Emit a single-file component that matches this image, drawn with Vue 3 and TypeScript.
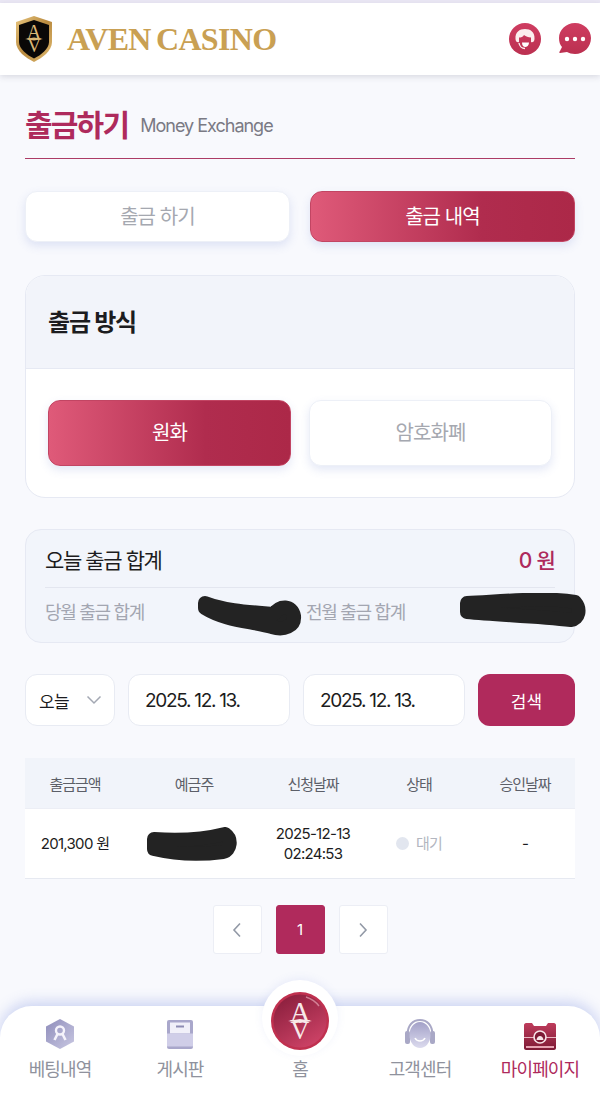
<template>
  <div class="page">
    <div class="topline"></div>
    <header class="header">
      <div class="brand">
        <svg class="shield" width="40" height="48" viewBox="0 0 40 48">
          <defs>
            <linearGradient id="goldEdge" x1="0" y1="0" x2="1" y2="1">
              <stop offset="0" stop-color="#e8c67f" />
              <stop offset="0.5" stop-color="#b98a3f" />
              <stop offset="1" stop-color="#e2bd73" />
            </linearGradient>
          </defs>
          <path d="M20 1 L38 7 V27 C38 36 28 43 20 47 C12 43 2 36 2 27 V7 Z" fill="url(#goldEdge)" />
          <path d="M20 5 L35 10 V27 C35 34 27 40 20 43.5 C13 40 5 34 5 27 V10 Z" fill="#0a0807" />
          <path d="M11 24 L20 22.5 L29 24 L20 25.5 Z" fill="#d9b675" />
          <text class="mono" fill="#d9b675">
            <tspan x="20" y="24" font-size="20">A</tspan>
            <tspan x="20" y="37" font-size="19">V</tspan>
          </text>
        </svg>
        <span class="brand-name">AVEN CASINO</span>
      </div>
      <div class="header-icons">
        <svg width="32" height="32" viewBox="0 0 32 32">
          <defs>
            <linearGradient id="redA" x1="0" y1="0" x2="0" y2="1">
              <stop offset="0" stop-color="#cf3d61" />
              <stop offset="1" stop-color="#bb3050" />
            </linearGradient>
          </defs>
          <circle cx="16" cy="16" r="16" fill="url(#redA)" />
          <path d="M6.5 16 C6 9 10.5 6 16 6 C21.5 6 26 9 25.5 16 C25.5 18.5 23.5 20 22 19 V14.5 C19 14.5 17 13.5 15 12 C14 14 12 14.5 10 14.5 V19 C8.5 20 6.5 18.5 6.5 16 Z" fill="#fbeeee" />
          <path d="M13 19.5 H20 C20 22.5 17.8 24 16.2 24 C14.5 24 13 22.5 13 19.5 Z" fill="#fff" />
          <path d="M10 20 C10.5 23 13 25.5 16 25.5" fill="none" stroke="#fbeeee" stroke-width="1.4" />
        </svg>
        <svg width="32" height="32" viewBox="0 0 32 32">
          <path d="M16 0 C25 0 32 7 32 15 C32 24 25 31 16 31 C13 31 10 30 8 29 L1 30 C0 30 0 29 1 28 L3 24 C1 22 0 19 0 15 C0 7 7 0 16 0 Z" fill="url(#redA)" />
          <circle cx="8" cy="16" r="2.2" fill="#fff" />
          <circle cx="16" cy="16" r="2.2" fill="#fff" />
          <circle cx="24" cy="16" r="2.2" fill="#fff" />
        </svg>
      </div>
    </header>

    <main class="content">
      <div class="title-row">
        <h1>출금하기</h1>
        <span>Money Exchange</span>
      </div>

      <div class="tabs">
        <button class="btn plain">출금 하기</button>
        <button class="btn active">출금 내역</button>
      </div>

      <section class="method">
        <div class="method-head">출금 방식</div>
        <div class="method-body">
          <button class="btn active tall">원화</button>
          <button class="btn plain tall">암호화폐</button>
        </div>
      </section>

      <section class="summary">
        <div class="summary-top">
          <span>오늘 출금 합계</span>
          <strong>0 원</strong>
        </div>
        <div class="summary-bottom">
          <span class="sum-left">당월 출금 합계</span>
          <span class="sum-right">전월 출금 합계</span>
        </div>
        <svg class="scribble one" width="108" height="42" viewBox="0 0 108 42">
          <path d="M9 8 C30 16 55 17 78 19 C84 10 96 10 98 21 C99 31 88 36 76 32 C55 26 30 26 9 13 Z" fill="#232323" stroke="#232323" stroke-width="14" stroke-linejoin="round" />
        </svg>
        <svg class="scribble two" width="130" height="36" viewBox="0 0 130 36">
          <path d="M10 10 C50 8 90 4 118 9 C124 16 122 26 114 27 C80 23 40 22 10 19 Z" fill="#232323" stroke="#232323" stroke-width="14" stroke-linejoin="round" />
        </svg>
      </section>

      <div class="filter">
        <div class="field select">
          <span>오늘</span>
          <svg width="16" height="10" viewBox="0 0 16 10"><path d="M1.5 1.5 L8 8 L14.5 1.5" fill="none" stroke="#a3a8b3" stroke-width="1.5" /></svg>
        </div>
        <div class="field date">2025. 12. 13.</div>
        <div class="field date">2025. 12. 13.</div>
        <button class="search">검색</button>
      </div>

      <div class="table">
        <div class="row head">
          <div v-for="col in columns" :key="col">{{ col }}</div>
        </div>
        <div class="row body">
          <div>201,300 원</div>
          <div class="holder">
            <svg width="92" height="34" viewBox="0 0 92 34">
              <path d="M9 12 C35 14 60 12 80 7 C87 12 86 23 78 25 C55 28 30 27 9 22 Z" fill="#232323" stroke="#232323" stroke-width="14" stroke-linejoin="round" />
            </svg>
          </div>
          <div>2025-12-13<br />02:24:53</div>
          <div class="status"><i></i>대기</div>
          <div>-</div>
        </div>
      </div>

      <div class="pager">
        <button>
          <svg width="10" height="16" viewBox="0 0 10 16"><path d="M8 1.5 L2 8 L8 14.5" fill="none" stroke="#9299a6" stroke-width="1.6" /></svg>
        </button>
        <button class="current">1</button>
        <button>
          <svg width="10" height="16" viewBox="0 0 10 16"><path d="M2 1.5 L8 8 L2 14.5" fill="none" stroke="#9299a6" stroke-width="1.6" /></svg>
        </button>
      </div>
    </main>

    <nav class="bottom">
      <div class="home-disc">
        <svg width="58" height="58" viewBox="0 0 58 58">
          <defs>
            <linearGradient id="homeFill" x1="0.2" y1="0" x2="0.8" y2="1">
              <stop offset="0" stop-color="#8a1f3d" />
              <stop offset="1" stop-color="#d04468" />
            </linearGradient>
          </defs>
          <circle cx="29" cy="29" r="29" fill="#c0304f" />
          <circle cx="29" cy="29" r="26.5" fill="url(#homeFill)" />
          <path d="M35 5 C41 7 45 10 48 14" fill="none" stroke="#f3b7c4" stroke-width="1.4" opacity=".6" />
          <path d="M17 29 L29 27 L41 29 L29 31 Z" fill="#f8e9e9" />
          <text class="mono" fill="#f8e9e9">
            <tspan x="29" y="29" font-size="28">A</tspan>
            <tspan x="29" y="47" font-size="26">V</tspan>
          </text>
        </svg>
      </div>
      <div class="tab">
        <svg width="30" height="32" viewBox="0 0 30 32">
          <defs>
            <linearGradient id="lilac" x1="0" y1="0" x2="1" y2="1">
              <stop offset="0" stop-color="#8f8dbb" />
              <stop offset="1" stop-color="#c9c8e2" />
            </linearGradient>
            <linearGradient id="lilacUp" x1="0" y1="0" x2="0" y2="1">
              <stop offset="0" stop-color="#a3a1c8" />
              <stop offset="1" stop-color="#dcdbee" />
            </linearGradient>
          </defs>
          <path d="M15 1 L29 8.5 V23.5 L15 31 L1 23.5 V8.5 Z" fill="url(#lilac)" />
          <circle cx="15" cy="12.5" r="4" fill="none" stroke="#f5f3fb" stroke-width="2.4" />
          <path d="M12.5 16 L9.5 22 M17.5 16 L20.5 22" stroke="#f5f3fb" stroke-width="2.6" />
        </svg>
        <span>베팅내역</span>
      </div>
      <div class="tab">
        <svg width="28" height="31" viewBox="0 0 28 31">
          <rect x="1" y="1" width="26" height="29" rx="2" fill="#a9a7cb" />
          <rect x="4" y="3.5" width="20" height="11" fill="#f1f0f9" />
          <rect x="10" y="6.5" width="8" height="2" fill="#8e8cb3" />
          <rect x="1" y="14.5" width="26" height="13" fill="#d0cee8" />
        </svg>
        <span>게시판</span>
      </div>
      <div class="tab home"><span>홈</span></div>
      <div class="tab">
        <svg width="32" height="32" viewBox="0 0 32 32">
          <path d="M3.5 17 C3.5 7 9 2 16 2 C23 2 28.5 7 28.5 17" fill="none" stroke="#a9a8c6" stroke-width="2" />
          <rect x="1" y="13" width="5" height="13" rx="2" fill="#a9a8c6" />
          <rect x="26" y="13" width="5" height="13" rx="2" fill="#a9a8c6" />
          <ellipse cx="16" cy="17" rx="10.5" ry="13" fill="url(#lilacUp)" />
          <path d="M11 20 C13 24 19 24 21 20" fill="none" stroke="#fff" stroke-width="1.6" />
        </svg>
        <span>고객센터</span>
      </div>
      <div class="tab current">
        <svg width="32" height="27" viewBox="0 0 32 27">
          <defs>
            <linearGradient id="chest" x1="0" y1="0" x2="0" y2="1">
              <stop offset="0" stop-color="#bf3c5c" />
              <stop offset="1" stop-color="#7d1a35" />
            </linearGradient>
          </defs>
          <path d="M2 0 H8 L10 3 H22 L24 0 H30 C31 0 32 1 32 2 V25 C32 26 31 27 30 27 H2 C1 27 0 26 0 25 V2 C0 1 1 0 2 0 Z" fill="url(#chest)" />
          <rect x="0" y="14" width="32" height="1" fill="#eab9c4" />
          <rect x="2" y="23" width="28" height="2" fill="#e6a3b2" />
          <circle cx="16" cy="14" r="6" fill="#7d1a35" stroke="#f7e4e8" stroke-width="1.6" />
          <path d="M12.5 17 C13 11.5 19 11.5 19.5 17 Z" fill="#f7e4e8" />
        </svg>
        <span>마이페이지</span>
      </div>
    </nav>
  </div>
</template>

<script setup lang="ts">
const columns: string[] = ['출금금액', '예금주', '신청날짜', '상태', '승인날짜']
</script>

<style>
html,
body {
  margin: 0;
  background: #f8f9fd;
}
</style>

<style scoped>
.page {
  position: relative;
  width: 600px;
  height: 1093px;
  overflow: hidden;
  background: #f8f9fd;
  font-family: Inter, "Noto Sans CJK KR", sans-serif;
  color: #1c1c20;
}

.topline {
  height: 3px;
  background: #ebe8f5;
}

.header {
  height: 72px;
  padding: 0 9px 0 14px;
  display: flex;
  align-items: center;
  justify-content: space-between;
  background: #fff;
  box-shadow: 0 2px 6px rgba(60, 60, 90, 0.16);
}

.brand {
  display: flex;
  align-items: center;
  gap: 13px;
}

.shield {
  display: block;
}

.mono {
  font-family: "Liberation Serif", serif;
  text-anchor: middle;
}

.brand-name {
  font-family: "Liberation Serif", serif;
  font-weight: 700;
  font-size: 32px;
  letter-spacing: -0.7px;
  word-spacing: -2px;
  color: #c9a053;
  white-space: nowrap;
}

.header-icons {
  display: flex;
  gap: 18px;
}

.content {
  padding: 0 25px;
}

.title-row {
  margin-top: 29px;
  height: 54px;
  display: flex;
  align-items: flex-start;
  gap: 12px;
  border-bottom: 1px solid #ac3b66;
}

h1 {
  margin: 0;
  font-size: 30px;
  line-height: 42px;
  font-weight: 700;
  letter-spacing: -1.8px;
  color: #ae2a5c;
}

.title-row span {
  font-size: 18px;
  line-height: 44px;
  letter-spacing: -1px;
  color: #7a7a84;
}

.btn {
  border: 1px solid #edf0f7;
  border-radius: 12px;
  height: 51px;
  padding: 0 0 3px;
  font: inherit;
  font-size: 20px;
  letter-spacing: -0.9px;
  box-shadow: 0 4px 10px rgba(90, 110, 200, 0.16);
}

.btn.plain {
  background: #fff;
  color: #a5a8b0;
}

.btn.active {
  border-color: #c24563;
  background: linear-gradient(90deg, #df5a79, #b02c4e 65%, #ac2848);
  color: #fff;
}

.tabs {
  margin-top: 32px;
  display: grid;
  grid-template-columns: 265px 265px;
  justify-content: space-between;
}

.method {
  margin-top: 33px;
  height: 223px;
  box-sizing: border-box;
  border: 1px solid #e6e9f3;
  border-radius: 20px;
  overflow: hidden;
  background: #fff;
}

.method-head {
  height: 93px;
  box-sizing: border-box;
  padding: 0 0 4px 22px;
  display: flex;
  align-items: center;
  background: #f2f4fa;
  border-bottom: 1px solid #e6e9f3;
  font-size: 24px;
  font-weight: 700;
  letter-spacing: -1.2px;
}

.method-body {
  padding: 31px 22px 0;
  display: grid;
  grid-template-columns: 243px 243px;
  justify-content: space-between;
}

.btn.tall {
  height: 66px;
  padding-bottom: 4px;
}

.summary {
  position: relative;
  margin-top: 31px;
  height: 114px;
  box-sizing: border-box;
  padding: 0 19px;
  border: 1px solid #e6e9f3;
  border-radius: 16px;
  background: #f2f5fb;
}

.summary-top {
  height: 58px;
  box-sizing: border-box;
  display: flex;
  align-items: center;
  justify-content: space-between;
  border-bottom: 1px solid #e3e6ef;
  font-size: 21px;
  letter-spacing: -1.4px;
}

.summary-top strong {
  font-weight: 500;
  letter-spacing: -0.7px;
  color: #ae2a5c;
}

.summary-bottom {
  height: 46px;
  display: flex;
  align-items: center;
  font-size: 18px;
  letter-spacing: -1.3px;
  color: #a3a6b1;
}

.sum-left {
  width: 261px;
}

.scribble {
  position: absolute;
  display: block;
}

.scribble.one {
  left: 170px;
  top: 65px;
}

.scribble.two {
  left: 431px;
  top: 63px;
}

.filter {
  margin-top: 31px;
  display: flex;
  gap: 13px;
}

.field {
  height: 52px;
  box-sizing: border-box;
  display: flex;
  align-items: center;
  background: #fff;
  border: 1px solid #e8ebf3;
  border-radius: 12px;
  font-size: 19px;
  letter-spacing: -1.3px;
}

.select {
  width: 90px;
  padding: 0 12px 0 13px;
  justify-content: space-between;
  font-size: 17px;
  letter-spacing: -0.7px;
}

.date {
  width: 162px;
  padding-left: 16px;
}

.search {
  width: 97px;
  height: 52px;
  border: 0;
  border-radius: 12px;
  background: #b02a5c;
  color: #fff;
  font: inherit;
  font-size: 17px;
}

.table {
  margin-top: 32px;
}

.row {
  display: grid;
  grid-template-columns: 100px 138px 100px 112px 100px;
  text-align: center;
  align-items: center;
  font-size: 15px;
  letter-spacing: -1px;
}

.row.head {
  height: 51px;
  box-sizing: border-box;
  background: #f1f4fa;
  color: #5c5f68;
  border-bottom: 1px solid #eceef5;
}

.row.body {
  height: 70px;
  box-sizing: border-box;
  background: #fff;
  border-bottom: 1px solid #e6e9f1;
  line-height: 20px;
  font-size: 15px;
  letter-spacing: -0.7px;
}

.holder svg {
  display: block;
  margin: 0 0 0 20px;
}

.status {
  display: flex;
  align-items: center;
  justify-content: center;
  gap: 7px;
  color: #b3b6bf;
}

.status i {
  width: 13px;
  height: 13px;
  border-radius: 50%;
  background: #e2e6ef;
}

.pager {
  margin-top: 26px;
  display: flex;
  justify-content: center;
  gap: 14px;
}

.pager button {
  width: 49px;
  height: 49px;
  padding: 0;
  display: flex;
  align-items: center;
  justify-content: center;
  background: #fff;
  border: 1px solid #eceef5;
  border-radius: 3px;
  font: inherit;
  font-size: 15px;
}

.pager .current {
  background: #b02a5c;
  border-color: #b02a5c;
  color: #fff;
}

.bottom {
  position: absolute;
  left: 0;
  right: 0;
  bottom: 0;
  height: 87px;
  display: grid;
  grid-template-columns: repeat(5, 1fr);
  background: #fff;
  border-radius: 32px 32px 0 0;
  box-shadow: 0 -4px 14px rgba(110, 130, 220, 0.32);
}

.tab {
  box-sizing: border-box;
  height: 87px;
  display: flex;
  flex-direction: column;
  align-items: center;
  justify-content: flex-end;
  padding-bottom: 12px;
  gap: 5px;
  font-size: 18px;
  letter-spacing: -0.9px;
  color: #8f929d;
}

.tab.current {
  color: #ae2a5c;
}

.home-disc {
  position: absolute;
  left: 262px;
  top: -26px;
  width: 76px;
  height: 76px;
  box-sizing: border-box;
  padding-top: 6px;
  display: flex;
  align-items: center;
  justify-content: center;
  background: #fff;
  border-radius: 50%;
  box-shadow: 0 -2px 8px rgba(110, 130, 220, 0.1);
}
</style>
